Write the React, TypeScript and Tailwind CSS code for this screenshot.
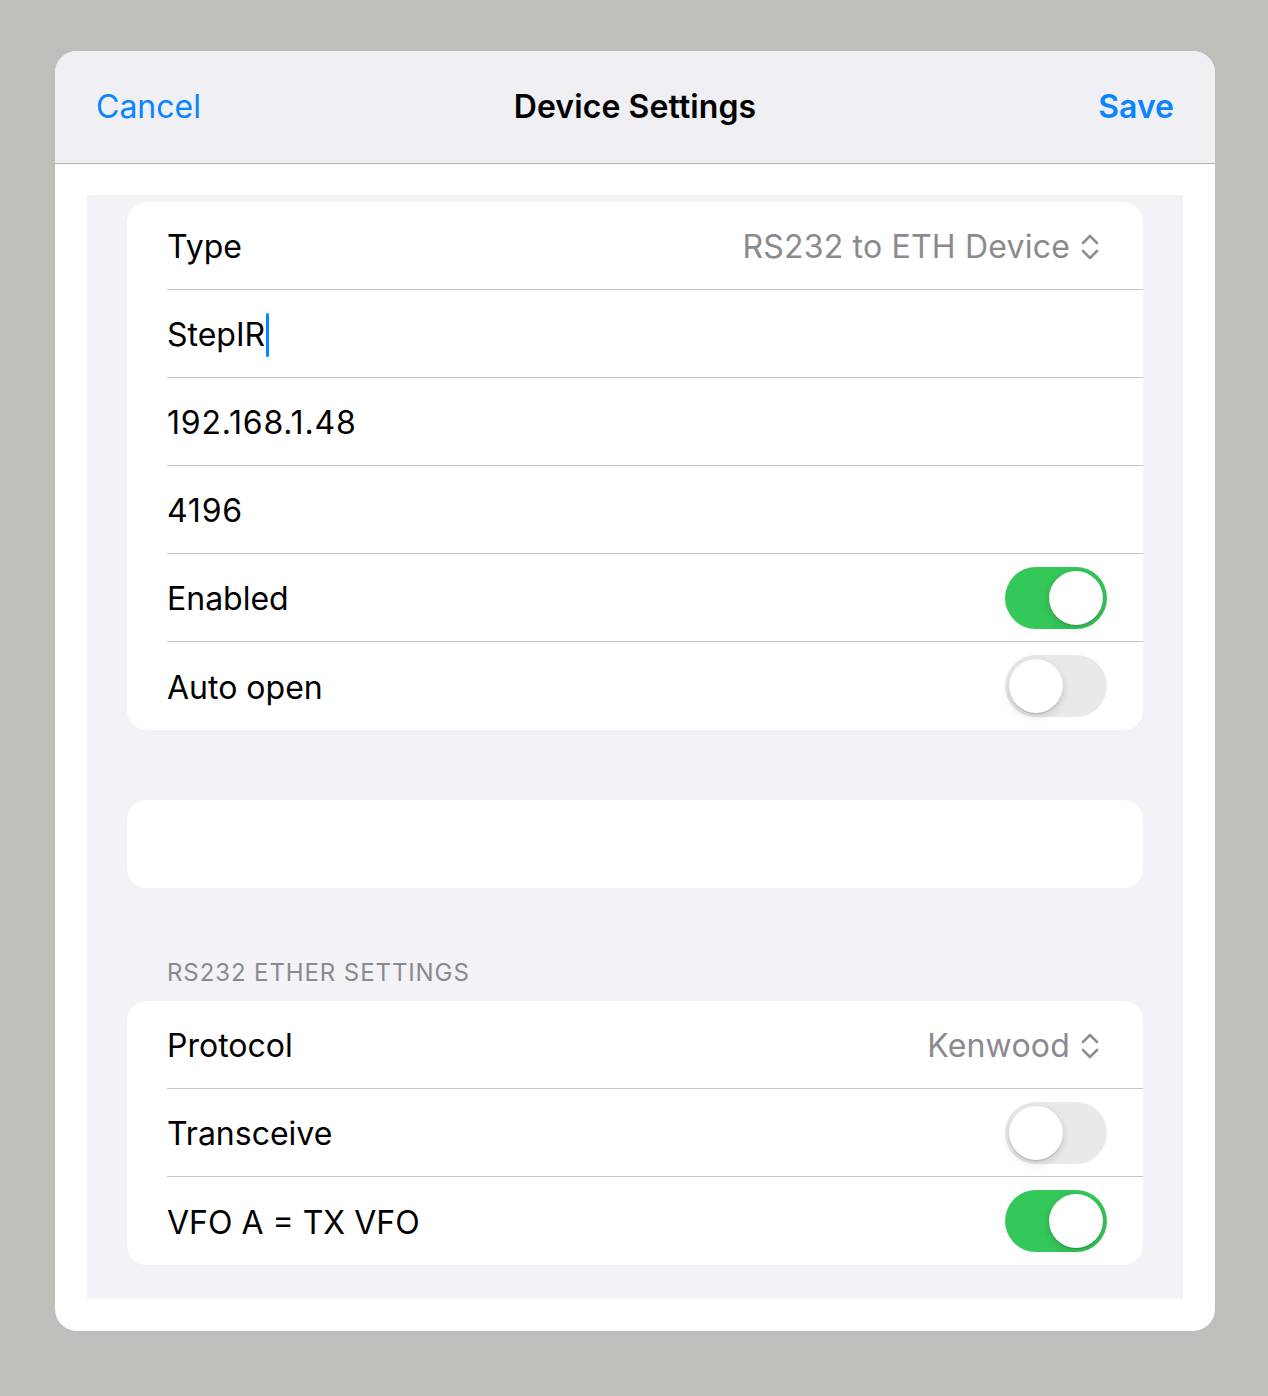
import React from 'react';

function UpDown() {
  return (
    <svg width="20" height="28" viewBox="0 0 20 28" fill="none" stroke="#8e8e93" strokeWidth="2.6" strokeLinecap="round" strokeLinejoin="round">
      <path d="M3 10 L10 3 L17 10" />
      <path d="M3 18 L10 25 L17 18" />
    </svg>
  );
}

function Toggle({ on }: { on: boolean }) {
  return (
    <div
      className={
        'w-[102px] h-[62px] rounded-full p-[4px] flex items-center ' +
        (on ? 'bg-[#34c759] justify-end' : 'bg-[#e9e9eb] justify-start')
      }
    >
      <div className="w-[54px] h-[54px] rounded-full bg-white shadow-[0_3px_8px_rgba(0,0,0,0.15),0_1px_1px_rgba(0,0,0,0.16)]" />
    </div>
  );
}

function Row({ children, last }: { children: React.ReactNode; last?: boolean }) {
  return (
    <div className="pl-[40px]">
      <div
        className={
          'h-[88px] flex items-center justify-between pr-[36px] ' +
          (last ? '' : 'border-b border-[#c6c6c8]')
        }
      >
        {children}
      </div>
    </div>
  );
}

export default function App() {
  const text = 'text-[32px] text-black pt-[3px]';
  const num = 'text-[32px] text-black pt-[3px] tracking-[0.8px]';
  return (
    <div className="min-h-[1396px] bg-[#bdbfbb] pt-[51px] px-[55px] font-['Inter',sans-serif]">
      <div className="w-[1160px] rounded-[22px] overflow-hidden bg-white">
        {/* Nav bar */}
        <div className="h-[113px] bg-[#efeff4] border-b border-[#b2b2b2] grid grid-cols-[1fr_auto_1fr] items-center px-[41px]">
          <span className="text-[32px] text-[#0a84ff] justify-self-start">Cancel</span>
          <span className="text-[32px] font-semibold text-black tracking-[0.1px]">Device Settings</span>
          <span className="text-[32px] font-semibold text-[#0a84ff] justify-self-end">Save</span>
        </div>

        <div className="pt-[31px] pb-[32px] px-[32px]">
          <div className="bg-[#f2f2f7] pt-[7px] pb-[34px] px-[40px]">
            <div className="bg-white rounded-[20px]">
              <Row>
                <span className={text}>Type</span>
                <span className="flex items-center gap-[10px] pr-[7px] pt-[3px] text-[32px] text-[#8a8a8e] tracking-[0.2px]">
                  RS232 to ETH Device <UpDown />
                </span>
              </Row>
              <Row>
                <span className={text + ' flex items-center'}>
                  StepIR<span className="inline-block w-[3px] h-[44px] bg-[#0a84ff] rounded-full ml-[1px]" />
                </span>
              </Row>
              <Row>
                <span className={num}>192.168.1.48</span>
              </Row>
              <Row>
                <span className={num}>4196</span>
              </Row>
              <Row>
                <span className={text}>Enabled</span>
                <Toggle on />
              </Row>
              <Row last>
                <span className={text}>Auto open</span>
                <Toggle on={false} />
              </Row>
            </div>

            <div className="bg-white rounded-[20px] h-[88px] mt-[70px]" />

            <div className="mt-[71px] mb-[14px] pl-[40px] text-[24px] text-[#8a8a8e] tracking-[0.9px] leading-[28px]">
              RS232 ETHER SETTINGS
            </div>

            <div className="bg-white rounded-[20px]">
              <Row>
                <span className={text}>Protocol</span>
                <span className="flex items-center gap-[10px] pr-[7px] pt-[3px] text-[32px] text-[#8a8a8e] tracking-[0.2px]">
                  Kenwood <UpDown />
                </span>
              </Row>
              <Row>
                <span className={text}>Transceive</span>
                <Toggle on={false} />
              </Row>
              <Row last>
                <span className={text}>VFO A = TX VFO</span>
                <Toggle on />
              </Row>
            </div>
          </div>
        </div>
      </div>
    </div>
  );
}
